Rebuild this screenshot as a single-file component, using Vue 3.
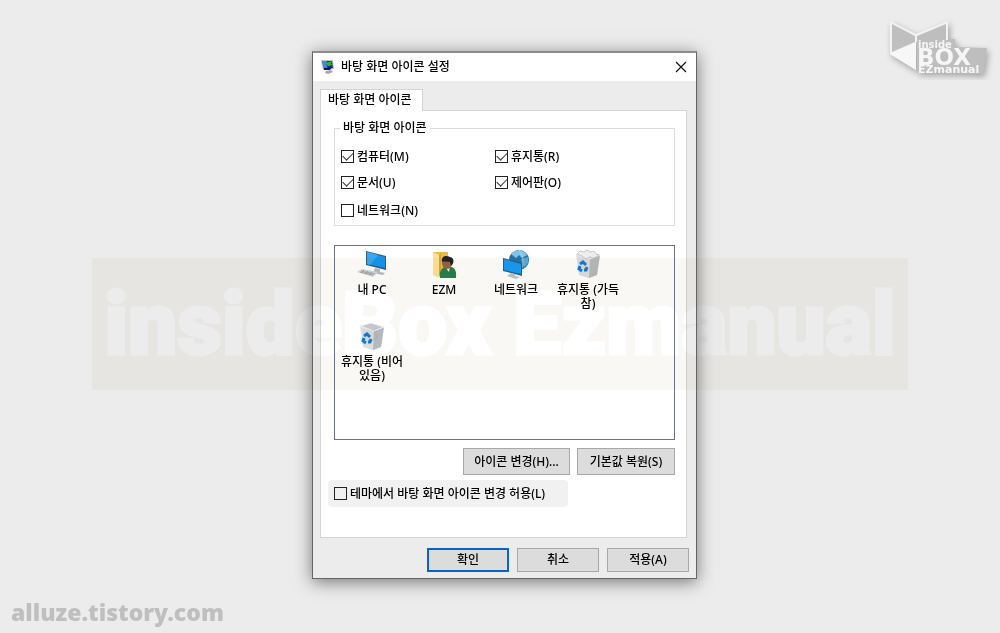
<script setup>
import { reactive, ref } from 'vue'

const options = reactive([
  { id: 'pc', label: '컴퓨터(M)', on: true },
  { id: 'trash', label: '휴지통(R)', on: true },
  { id: 'docs', label: '문서(U)', on: true },
  { id: 'panel', label: '제어판(O)', on: true },
  { id: 'network', label: '네트워크(N)', on: false }
])
const icons = [
  { kind: 'pc', label: '내 PC' },
  { kind: 'user', label: 'EZM' },
  { kind: 'network', label: '네트워크' },
  { kind: 'full', label: '휴지통 (가득 참)' },
  { kind: 'empty', label: '휴지통 (비어 있음)' }
]
const allowThemes = ref(false)
</script>

<template>
  <div class="page">
    <svg class="logo" viewBox="0 0 110 65" role="img" aria-label="inside BOX EZmanual">
      <g class="logo-art">
        <path d="M31 24 70 24 71 32 102 33 98 59 32 56Z" fill="#bebebe" />
        <path d="M5 6 31 19 31 55 5 39Z" fill="#f3f3f3" />
        <path d="M31 19 63 6 63 25 31 27Z" fill="#f3f3f3" />
        <path d="M7 9 30 21 30 27 7 37Z" fill="#bfbfbf" />
        <path d="M32 21 61 9 61 27 32 34Z" fill="#bebebe" />
        <path d="M5 39 31 27 31 55Z" fill="#f7f7f7" />
        <text x="33" y="33" font-size="10">inside</text>
        <text x="32" y="50" font-size="23">BOX</text>
        <text x="33" y="58" font-size="11">EZmanual</text>
      </g>
    </svg>

    <main class="dialog">
      <header class="titlebar">
        <svg class="app-icon" viewBox="0 0 16 16" aria-hidden="true">
          <path d="M1 1 13 1 14 10 3 11Z" fill="#b7bdc9" />
          <path d="M2 2 12 2 13 9 4 10Z" fill="#142ba0" />
          <path d="M2 2 7 2 6 5 8 9 4 10Z" fill="#3d92dc" />
          <path d="M5 4 12 2 11 5 13 6 8 7Z" fill="#35b22f" />
          <path d="M4 9 12 8 10 11 4 11Z" fill="#0d1b5e" />
          <path d="M6 12 11 11 13 13 8 15 5 14Z" fill="#a3a7af" />
        </svg>
        <h1>바탕 화면 아이콘 설정</h1>
        <button class="close" type="button" aria-label="닫기">
          <svg viewBox="0 0 12 12"><path d="M1 1 11 11M11 1 1 11" /></svg>
        </button>
      </header>

      <div class="body">
        <div class="tabs"><button type="button" class="tab">바탕 화면 아이콘</button></div>
        <section class="panel">
          <fieldset>
            <legend>바탕 화면 아이콘</legend>
            <div class="options">
              <label v-for="o in options" :key="o.id" class="check">
                <input v-model="o.on" type="checkbox" />{{ o.label }}
              </label>
            </div>
          </fieldset>

          <ul class="icons">
            <li v-for="i in icons" :key="i.label">
              <svg v-if="i.kind === 'pc'" viewBox="0 0 32 32">
                <path d="M10 3 30 8 30 22 10 17Z" fill="#315d82" />
                <path d="M11 4 29 9 29 20 11 16Z" fill="#1795f0" />
                <path d="M11 4 22 7 14 17 11 16Z" fill="#38a8f6" />
                <path d="M19 20 24 21 24 24 29 25 27 27 17 25Z" fill="#b5bbc2" />
                <path d="M6 21 22 24 17 29 1 24Z" fill="#d0d3d7" />
                <path d="M5 23 19 26M4 24 17 27M8 22 5 25M12 23 9 26M16 24 13 27" stroke="#969ba1" stroke-width=".7" />
              </svg>
              <svg v-else-if="i.kind === 'user'" viewBox="0 0 32 32">
                <path d="M5 4H20V25H8Z" fill="#edbd42" />
                <path d="M5 4 11 7V30L5 27Z" fill="#ffe391" />
                <path d="M11 7 13 5V25L11 29Z" fill="#d9a52b" />
                <path d="M12 30C11 21 15 19 20 19C26 18 29 22 28 30Z" fill="#23804d" />
                <path d="M17 19 21 24 22 18Z" fill="#e8eee8" />
                <ellipse cx="19" cy="15" rx="5" ry="6" fill="#926543" />
                <path d="M14 14C13 8 18 7 22 9C27 10 26 16 23 18L22 14C19 14 16 13 14 14Z" fill="#242321" />
              </svg>
              <svg v-else-if="i.kind === 'network'" viewBox="0 0 32 32">
                <circle cx="19" cy="12" r="10" fill="#2374ac" />
                <path d="M11 6C15 1 23 1 27 7L22 10 19 7 16 10Z" fill="#83c5e8" />
                <path d="M21 11 28 9 28 15 24 20Z" fill="#5cabd8" />
                <path d="M19 2C24 8 24 16 21 22" fill="none" stroke="#a9d8f0" stroke-width=".7" />
                <path d="M3 10 22 15V28L3 23Z" fill="#315d82" />
                <path d="M4 11 21 16V26L4 22Z" fill="#179bf5" />
                <path d="M11 25 15 26V28L20 29 16 31 7 28Z" fill="#bdc3c8" />
              </svg>
              <svg v-else viewBox="0 0 32 32">
                <path d="M4 6 15 3 28 7 25 27 17 30 7 27Z" fill="#dcdee1" />
                <path d="M18 11 28 7 25 27 17 30Z" fill="#b5b8bd" />
                <path d="M4 6 15 3 28 7 18 11Z" fill="#c3c6ca" stroke="#f1f2f3" />
                <path v-if="i.kind === 'full'" d="M5 6 8 3 12 4 15 2 18 4 22 3 24 6 27 7 22 10 18 9 14 11 10 8Z" fill="#edeef0" stroke="#b4b8bd" stroke-width=".7" />
                <g fill="none" stroke="#117ad5" stroke-width="3">
                  <path d="M8 16 11 14 14 17" />
                  <path d="M15 19 14 22 12 22" />
                  <path d="M10 23 7 21 8 18" />
                </g>
              </svg>
              <span>{{ i.label }}</span>
            </li>
          </ul>

          <div class="actions">
            <button type="button" class="btn change">아이콘 변경(H)...</button>
            <button type="button" class="btn restore">기본값 복원(S)</button>
          </div>
          <label class="check theme">
            <input v-model="allowThemes" type="checkbox" />테마에서 바탕 화면 아이콘 변경 허용(L)
          </label>
        </section>
        <footer>
          <button type="button" class="btn primary">확인</button>
          <button type="button" class="btn">취소</button>
          <button type="button" class="btn">적용(A)</button>
        </footer>
      </div>
    </main>

    <div class="watermark">insideBox Ezmanual</div>
    <p class="site">alluze.tistory.com</p>
  </div>
</template>

<style>
body { margin: 0; background: #ececec; }
</style>

<style scoped>
* { box-sizing: border-box; }
.page {
  position: relative;
  display: flex;
  align-items: center;
  justify-content: center;
  min-height: 100vh;
  padding: 0 0 3px 9px;
  overflow: hidden;
  background: #ececec;
  color: #000;
  font: 500 12px/16px "Noto Sans", "Noto Sans CJK KR", sans-serif;
}
button { font: inherit; color: inherit; padding: 0; }
.dialog {
  width: 385px;
  border: 1px solid #666;
  border-top: 2px solid #8c8c8c;
  background: #ececec;
  box-shadow: 0 3px 16px rgba(0, 0, 0, .5);
}
.titlebar { display: flex; align-items: center; height: 28px; padding: 0 9px 0 7px; background: #fff; }
.app-icon { width: 16px; height: 16px; }
h1 { flex: 1; margin: 0 0 0 5px; font: inherit; }
.close { width: 12px; height: 12px; border: 0; background: none; }
.close svg { display: block; }
.close path { stroke: #111; stroke-width: 1.2; }
.body { padding: 8px 9px 6px 7px; }
.tabs { display: flex; }
.tab {
  position: relative;
  height: 22px;
  margin-bottom: -1px;
  padding: 0 10px 2px 7px;
  border: 1px solid #d4d4d4;
  border-bottom: 0;
  background: #fff;
}
.panel { padding: 9px 11px 30px 13px; border: 1px solid #d4d4d4; background: #fff; }
fieldset { margin: 0; padding: 0 5px; border: 1px solid #dcdcdc; min-width: 0; }
legend { padding: 0 3px; }
.options { display: grid; grid-template: 25px 27px 29px / 154px 1fr; align-items: center; padding: 8px 0 0 1px; }
.check { display: flex; align-items: center; gap: 3px; white-space: nowrap; }
.check input { appearance: none; width: 13px; height: 13px; margin: 0; border: 1px solid #222; background: #fff; }
.check input:checked::before {
  content: "";
  display: block;
  width: 9px;
  height: 5px;
  margin: 1px;
  border: solid #333;
  border-width: 0 0 1px 1px;
  transform: rotate(-45deg);
}
.icons {
  display: grid;
  grid-template-columns: repeat(auto-fill, 72px);
  grid-auto-rows: 72px;
  min-height: 195px;
  margin: 19px 0 0;
  padding: 2px 1px;
  border: 1px solid #6c7388;
  list-style: none;
}
.icons li { display: flex; flex-direction: column; align-items: center; gap: 3px; line-height: 14px; text-align: center; word-break: keep-all; }
.icons svg { width: 32px; height: 32px; }
.actions { display: flex; justify-content: flex-end; gap: 7px; margin-top: 8px; }
.btn { width: 82px; height: 24px; border: 1px solid #a8a8a8; background: #dcdcdc; }
.actions .btn { height: 27px; }
.change { width: 107px; }
.restore { width: 98px; }
.theme { width: 240px; height: 27px; margin: 5px 0 0 -6px; padding-left: 6px; border-radius: 4px; background: #f1f1f1; }
.theme input { background: #f1f1f1; }
footer { display: flex; justify-content: flex-end; gap: 8px; margin: 10px -2px 0 0; }
.btn.primary { border: 2px solid #0863d2; }
.watermark {
  position: absolute;
  top: 258px;
  left: 50%;
  transform: translateX(-50%);
  width: 816px;
  height: 132px;
  background: #f9f8f5;
  color: #fff;
  font: 900 87px/132px Roboto, sans-serif;
  -webkit-text-stroke: 3px #fff;
  text-align: center;
  white-space: nowrap;
  mix-blend-mode: multiply;
  pointer-events: none;
}
.site { position: absolute; left: 11px; bottom: 9px; margin: 0; color: #bfbfbf; font: 900 23px/24px "Noto Sans", sans-serif; }
.logo { position: absolute; top: 15px; right: 5px; width: 110px; height: 65px; }
.logo-art { filter: drop-shadow(2px 3px 3px rgba(0, 0, 0, .3)); }
.logo text { font-family: "DejaVu Sans", sans-serif; font-weight: bold; fill: #f6f6f6; }
</style>
